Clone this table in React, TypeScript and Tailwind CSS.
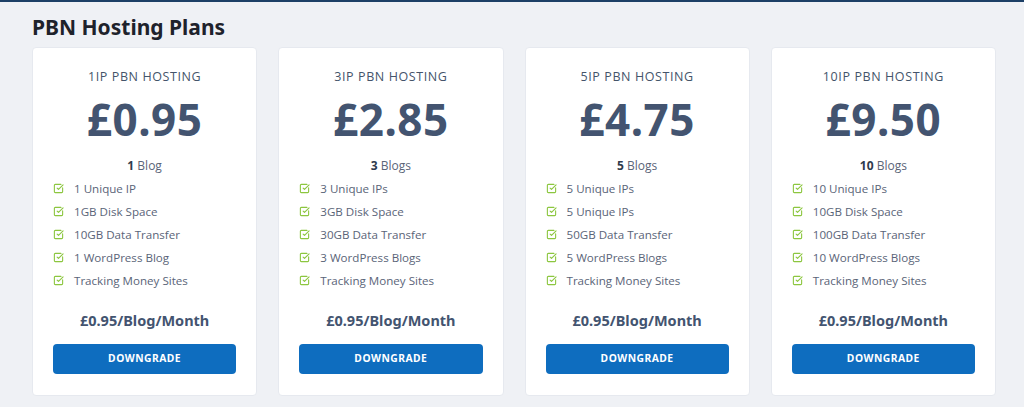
import React from "react";
import { SquareCheckBig } from "lucide-react";

interface Plan {
  title: string;
  price: string;
  blogs: number;
  features: string[];
}

const plans: Plan[] = [
  {
    title: "1IP PBN HOSTING",
    price: "£0.95",
    blogs: 1,
    features: ["1 Unique IP", "1GB Disk Space", "10GB Data Transfer", "1 WordPress Blog", "Tracking Money Sites"],
  },
  {
    title: "3IP PBN HOSTING",
    price: "£2.85",
    blogs: 3,
    features: ["3 Unique IPs", "3GB Disk Space", "30GB Data Transfer", "3 WordPress Blogs", "Tracking Money Sites"],
  },
  {
    title: "5IP PBN HOSTING",
    price: "£4.75",
    blogs: 5,
    features: ["5 Unique IPs", "5 Unique IPs", "50GB Data Transfer", "5 WordPress Blogs", "Tracking Money Sites"],
  },
  {
    title: "10IP PBN HOSTING",
    price: "£9.50",
    blogs: 10,
    features: ["10 Unique IPs", "10GB Disk Space", "100GB Data Transfer", "10 WordPress Blogs", "Tracking Money Sites"],
  },
];

const heading = { fontFamily: "'Noto Sans', 'Open Sans', sans-serif" };
const body = { fontFamily: "'Open Sans', 'Noto Sans', sans-serif" };

function PlanCard({ plan }: { plan: Plan }) {
  return (
    <div className="bg-white rounded-[4px] border border-[#e6e9ef] flex flex-col h-[349px] px-[20px] pt-[20px]">
      <div className="text-center text-[12.5px] tracking-[0.6px] text-[#44546a] leading-[17px]" style={body}>
        {plan.title}
      </div>
      <div
        className="text-center text-[44px] font-bold text-[#435470] leading-[48px] mt-[10px] tracking-[0.5px]"
        style={heading}
      >
        {plan.price}
      </div>
      <div className="text-center text-[12px] text-[#5a6478] mt-[14px] leading-[17px]" style={body}>
        <span className="font-bold text-[#2f3a4c]">{plan.blogs}</span> {plan.blogs === 1 ? "Blog" : "Blogs"}
      </div>
      <ul className="mt-[3px] flex flex-col" style={body}>
        {plan.features.map((f, i) => (
          <li key={i} className="flex items-center h-[23px] text-[11.6px] text-[#5a6478]">
            <SquareCheckBig className="w-[11px] h-[11px] text-[#8cc63f] mr-[10px]" strokeWidth={2.4} />
            {f}
          </li>
        ))}
      </ul>
      <div className="text-center text-[14.5px] font-bold text-[#435470] mt-[18px] leading-[20px]" style={heading}>
        £0.95/Blog/Month
      </div>
      <button
        className="mt-[14px] h-[30px] rounded-[4px] bg-[#0e6dbf] text-white text-[10.3px] font-bold tracking-[0.5px]"
        style={heading}
      >
        DOWNGRADE
      </button>
    </div>
  );
}

export default function App() {
  return (
    <div className="w-[1024px] h-[407px] bg-[#eff1f5] border-t-[2px] border-[#1c3f66] overflow-hidden">
      <div className="pl-[32px] pr-[28px]">
        <h1 className="text-[21px] font-bold text-[#1e222b] leading-[28px] pt-[11px]" style={heading}>
          PBN Hosting Plans
        </h1>
        <div className="grid grid-cols-4 gap-[21px] mt-[6px]">
          {plans.map((p) => (
            <PlanCard key={p.title} plan={p} />
          ))}
        </div>
      </div>
    </div>
  );
}
